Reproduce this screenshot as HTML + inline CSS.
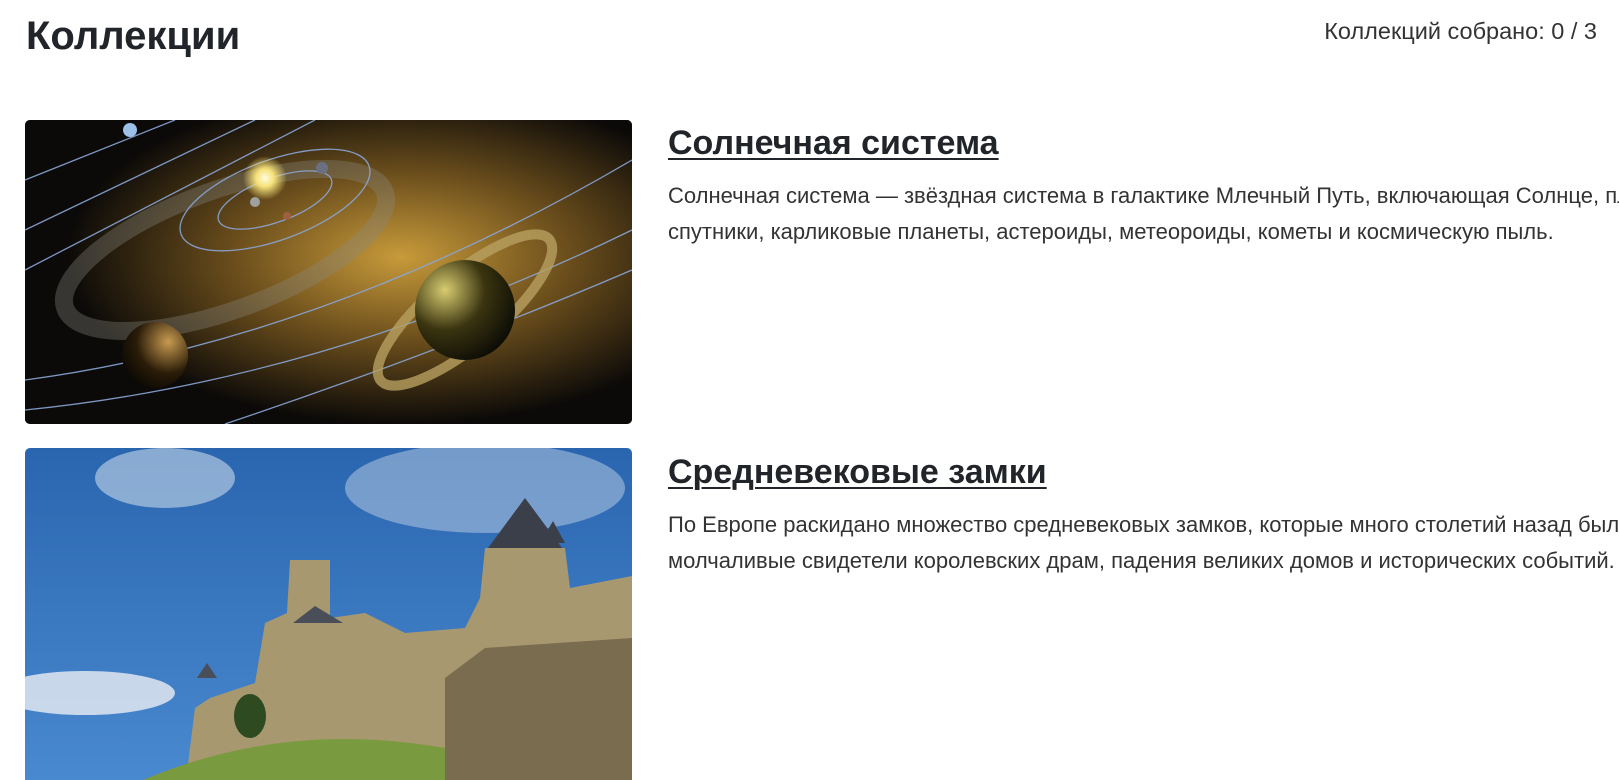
<!DOCTYPE html>
<html><head><meta charset="utf-8"><style>
html,body{margin:0;padding:0;background:#fff;overflow:hidden;width:1619px;height:780px}
body{font-family:"Liberation Sans",sans-serif;color:#212529;position:relative}
.h1{position:absolute;left:26px;top:12px;font-size:40px;font-weight:bold;line-height:48px;margin:0}
.cnt{position:absolute;right:22px;top:17px;font-size:23.5px;line-height:28px;color:#333}
.img{position:absolute;left:25px;width:607px;border-radius:5px;overflow:hidden}
.t{position:absolute;left:668px;font-size:34px;font-weight:bold;text-decoration:underline;text-decoration-thickness:2px;text-underline-offset:4px;white-space:nowrap;line-height:40px}
.d{position:absolute;left:668px;width:951px;overflow:hidden;font-size:22px;line-height:36px;white-space:nowrap;color:#333}
</style></head><body>
<div class="h1">Коллекции</div>
<div class="cnt">Коллекций собрано: 0 / 3</div>

<div class="img" style="top:120px;height:304px">
<svg width="607" height="304" viewBox="0 0 607 304">
<defs>
<radialGradient id="neb" cx="0.62" cy="0.45" r="0.55"><stop offset="0" stop-color="#c79a3a"/><stop offset="0.5" stop-color="#6b4e1c"/><stop offset="1" stop-color="#0c0a08"/></radialGradient>
<radialGradient id="sun" cx="0.5" cy="0.5" r="0.5"><stop offset="0" stop-color="#fffbe0"/><stop offset="0.4" stop-color="#f6e27a"/><stop offset="1" stop-color="#f6e27a" stop-opacity="0"/></radialGradient>
<radialGradient id="sat" cx="0.3" cy="0.3" r="0.8"><stop offset="0" stop-color="#d8cc70"/><stop offset="0.5" stop-color="#3a3410"/><stop offset="1" stop-color="#0a0a05"/></radialGradient>
<radialGradient id="pl" cx="0.7" cy="0.3" r="0.8"><stop offset="0" stop-color="#c79a50"/><stop offset="0.6" stop-color="#2a1c08"/><stop offset="1" stop-color="#0a0804"/></radialGradient>
</defs>
<rect width="607" height="304" fill="#0e0c0a"/>
<rect width="607" height="304" fill="url(#neb)"/>
<ellipse cx="200" cy="130" rx="170" ry="60" transform="rotate(-20 200 130)" fill="none" stroke="#8a8a80" stroke-width="18" opacity="0.35"/>
<g fill="none" stroke="#8aa6d8" stroke-width="1.3" opacity="0.9">
<ellipse cx="250" cy="80" rx="60" ry="22" transform="rotate(-20 250 80)"/>
<ellipse cx="250" cy="80" rx="100" ry="40" transform="rotate(-20 250 80)"/>
<path d="M0 60 L150 0"/><path d="M0 110 L230 0"/><path d="M0 150 L290 0"/>
<path d="M0 260 Q300 220 607 40"/><path d="M0 290 Q300 260 607 110"/><path d="M200 304 Q420 230 607 150"/>
</g>
<circle cx="240" cy="58" r="22" fill="url(#sun)"/>
<circle cx="105" cy="10" r="7" fill="#9cc0e8"/>
<circle cx="297" cy="48" r="6" fill="#6a7080"/>
<circle cx="230" cy="82" r="5" fill="#a0a0a0"/>
<circle cx="262" cy="96" r="4" fill="#a06040"/>
<ellipse cx="440" cy="190" rx="110" ry="35" transform="rotate(-40 440 190)" fill="none" stroke="#b8a060" stroke-width="10" opacity="0.8"/>
<circle cx="440" cy="190" r="50" fill="url(#sat)"/>
<circle cx="130" cy="235" r="33" fill="url(#pl)"/>
</svg></div>
<div class="t" style="top:123px">Солнечная система</div>
<div class="d" style="top:178px">Солнечная система — звёздная система в галактике Млечный Путь, включающая Солнце, планеты и их<br>спутники, карликовые планеты, астероиды, метеороиды, кометы и космическую пыль.</div>

<div class="img" style="top:448px;height:340px">
<svg width="607" height="340" viewBox="0 0 607 340">
<defs><linearGradient id="sky" x1="0" y1="0" x2="0" y2="1"><stop offset="0" stop-color="#2a66b0"/><stop offset="1" stop-color="#4a8ad0"/></linearGradient></defs>
<rect width="607" height="340" fill="url(#sky)"/>
<ellipse cx="140" cy="30" rx="70" ry="30" fill="#c8d8ea" opacity="0.6"/>
<ellipse cx="460" cy="40" rx="140" ry="45" fill="#c0d0e4" opacity="0.5"/>
<ellipse cx="60" cy="245" rx="90" ry="22" fill="#e0e8f0" opacity="0.85"/>
<polygon fill="#a89870" points="160,340 170,260 185,250 230,235 240,175 262,165 265,112 305,112 305,170 340,165 380,185 440,180 455,150 460,100 540,100 545,140 607,128 607,340"/>
<polygon fill="#7a6c4e" points="420,340 420,230 460,200 607,190 607,340"/>
<polygon fill="#3a3f4a" points="463,100 500,50 537,100"/>
<polygon fill="#3a3f4a" points="515,95 528,73 540,95"/>
<polygon fill="#4a4e58" points="268,175 290,158 318,175"/>
<polygon fill="#4a4e58" points="172,230 182,215 192,230"/>
<path d="M100 340 Q250 270 420 300 L420 340Z" fill="#7a9a40"/>
<ellipse cx="225" cy="268" rx="16" ry="22" fill="#2e4a20"/>
</svg></div>
<div class="t" style="top:452px">Средневековые замки</div>
<div class="d" style="top:507px">По Европе раскидано множество средневековых замков, которые много столетий назад были<br>молчаливые свидетели королевских драм, падения великих домов и исторических событий.</div>
</body></html>
